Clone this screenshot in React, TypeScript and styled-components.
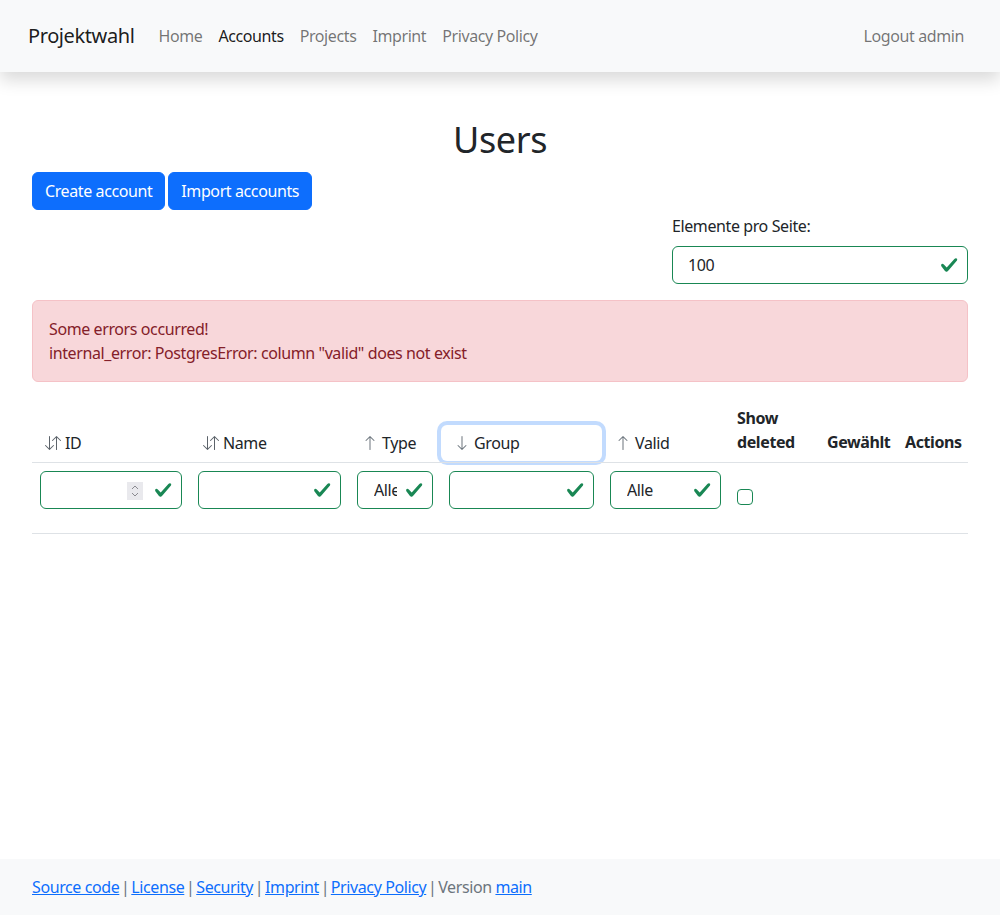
import React from "react";
import styled, { createGlobalStyle } from "styled-components";

const GlobalStyle = createGlobalStyle`
  html, body { margin: 0; padding: 0; }
  body {
    font-family: "Noto Sans", "Open Sans", sans-serif;
    font-size: 16px;
    line-height: 1.5;
    letter-spacing: -0.4px;
    color: #212529;
    background: #fff;
  }
  * { box-sizing: border-box; }
`;

const Page = styled.div`
  display: flex;
  flex-direction: column;
  min-height: 100vh;
`;

const Navbar = styled.nav`
  height: 72px;
  display: flex;
  align-items: center;
  padding: 0 28px;
  background: #f8f9fa;
  box-shadow: 0 8px 16px rgba(0, 0, 0, 0.15);
  position: relative;
  z-index: 1;
`;

const Brand = styled.a`
  font-size: 20px;
  line-height: 30px;
  color: rgba(0, 0, 0, 0.9);
  text-decoration: none;
  margin-right: 16px;
`;

const NavList = styled.div`
  display: flex;
  flex: 1;
`;

const NavLink = styled.a<{ $active?: boolean }>`
  padding: 8px;
  color: ${(p) => (p.$active ? "rgba(0,0,0,0.9)" : "rgba(0,0,0,0.55)")};
  text-decoration: none;
`;

const Main = styled.main`
  width: 936px;
  margin: 0 auto;
  padding-top: 44px;
`;

const Title = styled.h1`
  margin: 0 0 8px;
  font-size: 36px;
  line-height: 48px;
  font-weight: 400;
  text-align: center;
`;

const ButtonRow = styled.div`
  display: flex;
  gap: 3px;
`;

const PrimaryButton = styled.button`
  font: inherit;
  letter-spacing: inherit;
  height: 38px;
  padding: 0 12px;
  color: #fff;
  background: #0d6efd;
  border: 1px solid #0d6efd;
  border-radius: 6px;
`;

const PageSizeRow = styled.div`
  display: flex;
  justify-content: flex-end;
  margin-top: 4px;
`;

const PageSizeField = styled.div`
  width: 296px;
`;

const Label = styled.label`
  display: block;
  margin-bottom: 8px;
`;

const ValidBox = styled.div<{ $padLeft?: number; $padRight?: number }>`
  position: relative;
  height: 38px;
  display: flex;
  align-items: center;
  padding: 0 ${(p) => p.$padRight ?? 36}px 0 ${(p) => p.$padLeft ?? 12}px;
  border: 1px solid #198754;
  border-radius: 6px;
  background: #fff;
  white-space: nowrap;
`;

const Value = styled.span`
  flex: 1;
  min-width: 0;
  overflow: hidden;
`;

const CheckIcon = styled.svg`
  position: absolute;
  right: 9px;
  top: 9px;
  width: 18px;
  height: 18px;
`;

const Spinner = styled.div`
  position: absolute;
  right: 38px;
  top: 10px;
  width: 16px;
  height: 18px;
  background: #e9e9ed;
  display: flex;
  align-items: center;
  justify-content: center;
`;

const Alert = styled.div`
  margin: 16px 0;
  padding: 16px;
  background: #f8d7da;
  border: 1px solid #f5c2c7;
  border-radius: 6px;
  color: #842029;
`;

const Table = styled.table`
  width: 100%;
  border-collapse: collapse;
  table-layout: fixed;
`;

const Th = styled.th<{ $sort?: boolean }>`
  text-align: left;
  vertical-align: bottom;
  font-weight: 700;
  padding: ${(p) => (p.$sort ? "0 0 1px" : "8px")};
  border-bottom: 1px solid #dee2e6;
`;

const SortButton = styled.button<{ $focused?: boolean }>`
  font: inherit;
  font-weight: 400;
  letter-spacing: inherit;
  width: 100%;
  height: 36px;
  display: flex;
  align-items: center;
  gap: 4px;
  padding: 0 12px;
  color: #212529;
  background: transparent;
  border: 1px solid transparent;
  border-radius: 6px;
  text-align: left;
  box-shadow: ${(p) => (p.$focused ? "0 0 0 4px rgba(13,110,253,0.25)" : "none")};
  svg { flex: none; }
`;

const Td = styled.td`
  padding: 8px;
  vertical-align: middle;
  border-bottom: 1px solid #dee2e6;
`;

const FieldWrap = styled.div`
  margin-bottom: 16px;
`;

const Checkbox = styled.span`
  display: block;
  width: 16px;
  height: 16px;
  margin-top: -2px;
  border: 1px solid #198754;
  border-radius: 4px;
  background: #fff;
`;

const Footer = styled.footer`
  margin-top: auto;
  background: #f8f9fa;
  padding: 16px 0;
  color: #6c757d;
`;

const FooterInner = styled.div`
  width: 936px;
  margin: 0 auto;
  word-spacing: -2px;
`;

const FooterLink = styled.a`
  color: #0d6efd;
  text-decoration: underline;
  word-spacing: normal;
`;

const VersionText = styled.span`
  word-spacing: normal;
`;

const Check = () => (
  <CheckIcon viewBox="0 0 8 8">
    <path
      fill="#198754"
      d="M2.3 6.73.6 4.53c-.4-1.04.46-1.4 1.11-.8l1.28 1.4 3.4-3.8c.6-.63 1.6-.27 1.16.7l-4 4.6c-.43.5-.8.4-1.1.1z"
    />
  </CheckIcon>
);

const ArrowDownUp = () => (
  <svg width="16" height="16" viewBox="0 0 16 16" fill="#5c636a">
    <path d="M11.5 15a.5.5 0 0 0 .5-.5V2.707l3.146 3.147a.5.5 0 0 0 .708-.708l-4-4a.5.5 0 0 0-.708 0l-4 4a.5.5 0 1 0 .708.708L11 2.707V14.5a.5.5 0 0 0 .5.5zm-7-14a.5.5 0 0 1 .5.5v11.793l3.146-3.147a.5.5 0 0 1 .708.708l-4 4a.5.5 0 0 1-.708 0l-4-4a.5.5 0 0 1 .708-.708L4 13.293V1.5a.5.5 0 0 1 .5-.5z" />
  </svg>
);

const ArrowUp = () => (
  <svg width="16" height="16" viewBox="0 0 16 16" fill="#6c757d">
    <path d="M8 15a.5.5 0 0 0 .5-.5V2.707l3.146 3.147a.5.5 0 0 0 .708-.708l-4-4a.5.5 0 0 0-.708 0l-4 4a.5.5 0 1 0 .708.708L7.5 2.707V14.5a.5.5 0 0 0 .5.5z" />
  </svg>
);

const ArrowDown = () => (
  <svg width="16" height="16" viewBox="0 0 16 16" fill="#6c757d">
    <path d="M8 1a.5.5 0 0 1 .5.5v11.793l3.146-3.147a.5.5 0 0 1 .708.708l-4 4a.5.5 0 0 1-.708 0l-4-4a.5.5 0 0 1 .708-.708L7.5 13.293V1.5A.5.5 0 0 1 8 1z" />
  </svg>
);

const columns = [158, 159, 92, 161, 127, 90, 78, 71];

export default function App() {
  return (
    <Page>
      <GlobalStyle />
      <Navbar>
        <Brand href="#">Projektwahl</Brand>
        <NavList>
          <NavLink href="#">Home</NavLink>
          <NavLink href="#" $active>
            Accounts
          </NavLink>
          <NavLink href="#">Projects</NavLink>
          <NavLink href="#">Imprint</NavLink>
          <NavLink href="#">Privacy Policy</NavLink>
        </NavList>
        <NavLink href="#">Logout admin</NavLink>
      </Navbar>

      <Main>
        <Title>Users</Title>
        <ButtonRow>
          <PrimaryButton>Create account</PrimaryButton>
          <PrimaryButton>Import accounts</PrimaryButton>
        </ButtonRow>

        <PageSizeRow>
          <PageSizeField>
            <Label>Elemente pro Seite:</Label>
            <ValidBox $padLeft={15}>
              <Value>100</Value>
              <Check />
            </ValidBox>
          </PageSizeField>
        </PageSizeRow>

        <Alert>
          Some errors occurred!
          <br />
          internal_error: PostgresError: column "valid" does not exist
        </Alert>

        <Table>
          <colgroup>
            {columns.map((w, i) => (
              <col key={i} style={{ width: w }} />
            ))}
          </colgroup>
          <thead>
            <tr>
              <Th $sort>
                <SortButton>
                  <ArrowDownUp />
                  ID
                </SortButton>
              </Th>
              <Th $sort>
                <SortButton>
                  <ArrowDownUp />
                  Name
                </SortButton>
              </Th>
              <Th $sort>
                <SortButton>
                  <ArrowUp />
                  Type
                </SortButton>
              </Th>
              <Th $sort>
                <SortButton $focused>
                  <ArrowDown />
                  Group
                </SortButton>
              </Th>
              <Th $sort>
                <SortButton>
                  <ArrowUp />
                  Valid
                </SortButton>
              </Th>
              <Th>Show deleted</Th>
              <Th>Gewählt</Th>
              <Th>Actions</Th>
            </tr>
          </thead>
          <tbody>
            <tr>
              <Td>
                <FieldWrap>
                  <ValidBox>
                    <Spinner>
                      <svg width="8" height="14" viewBox="0 0 8 14" fill="none" stroke="#8a8a90" strokeWidth="1">
                        <path d="M1 5 L4 2 L7 5" />
                        <path d="M1 9 L4 12 L7 9" />
                      </svg>
                    </Spinner>
                    <Check />
                  </ValidBox>
                </FieldWrap>
              </Td>
              <Td>
                <FieldWrap>
                  <ValidBox>
                    <Check />
                  </ValidBox>
                </FieldWrap>
              </Td>
              <Td>
                <FieldWrap>
                  <ValidBox $padLeft={16} $padRight={35}>
                    <Value>Alle</Value>
                    <Check />
                  </ValidBox>
                </FieldWrap>
              </Td>
              <Td>
                <FieldWrap>
                  <ValidBox>
                    <Check />
                  </ValidBox>
                </FieldWrap>
              </Td>
              <Td>
                <FieldWrap>
                  <ValidBox $padLeft={16}>
                    <Value>Alle</Value>
                    <Check />
                  </ValidBox>
                </FieldWrap>
              </Td>
              <Td>
                <Checkbox />
              </Td>
              <Td />
              <Td />
            </tr>
          </tbody>
        </Table>
      </Main>

      <Footer>
        <FooterInner>
          <FooterLink href="#">Source code</FooterLink> |{" "}
          <FooterLink href="#">License</FooterLink> |{" "}
          <FooterLink href="#">Security</FooterLink> |{" "}
          <FooterLink href="#">Imprint</FooterLink> |{" "}
          <FooterLink href="#">Privacy Policy</FooterLink> |{" "}
          <VersionText>Version </VersionText>
          <FooterLink href="#">main</FooterLink>
        </FooterInner>
      </Footer>
    </Page>
  );
}
